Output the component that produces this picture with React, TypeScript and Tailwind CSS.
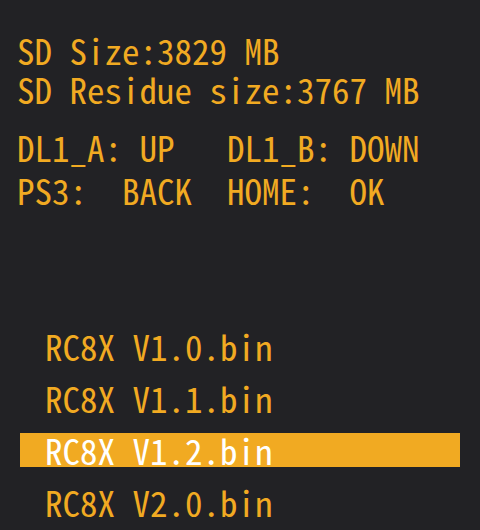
const files = ['RC8X V1.0.bin', 'RC8X V1.1.bin', 'RC8X V1.2.bin', 'RC8X V2.0.bin']
const selected = 2

export default function App() {
  return (
    <div
      className="h-[530px] w-full overflow-hidden bg-[#222225] text-[35px] text-[#f1aa22]"
      style={{ fontFamily: '"Noto Sans Mono CJK SC", "DejaVu Sans Mono", monospace' }}
    >
      {/* card info */}
      <div className="whitespace-pre pl-[17px] pt-[30px] leading-[39px]">
        <div>SD Size:3829 MB</div>
        <div>SD Residue size:3767 MB</div>
      </div>

      {/* key mapping */}
      <div className="mt-[17px] whitespace-pre pl-[17px] leading-[43px]">
        <div>DL1_A: UP   DL1_B: DOWN</div>
        <div>PS3:  BACK  HOME:  OK</div>
      </div>

      {/* firmware list */}
      <div className="mt-[118px] flex flex-col gap-[18px]">
        {files.map((f, i) => (
          <div
            key={f}
            className={`mx-[20px] h-[34px] whitespace-pre pl-[25px] leading-[34px] ${
              i === selected ? 'bg-[#f1aa22] text-white' : ''
            }`}
          >
            {f}
          </div>
        ))}
      </div>
    </div>
  )
}
